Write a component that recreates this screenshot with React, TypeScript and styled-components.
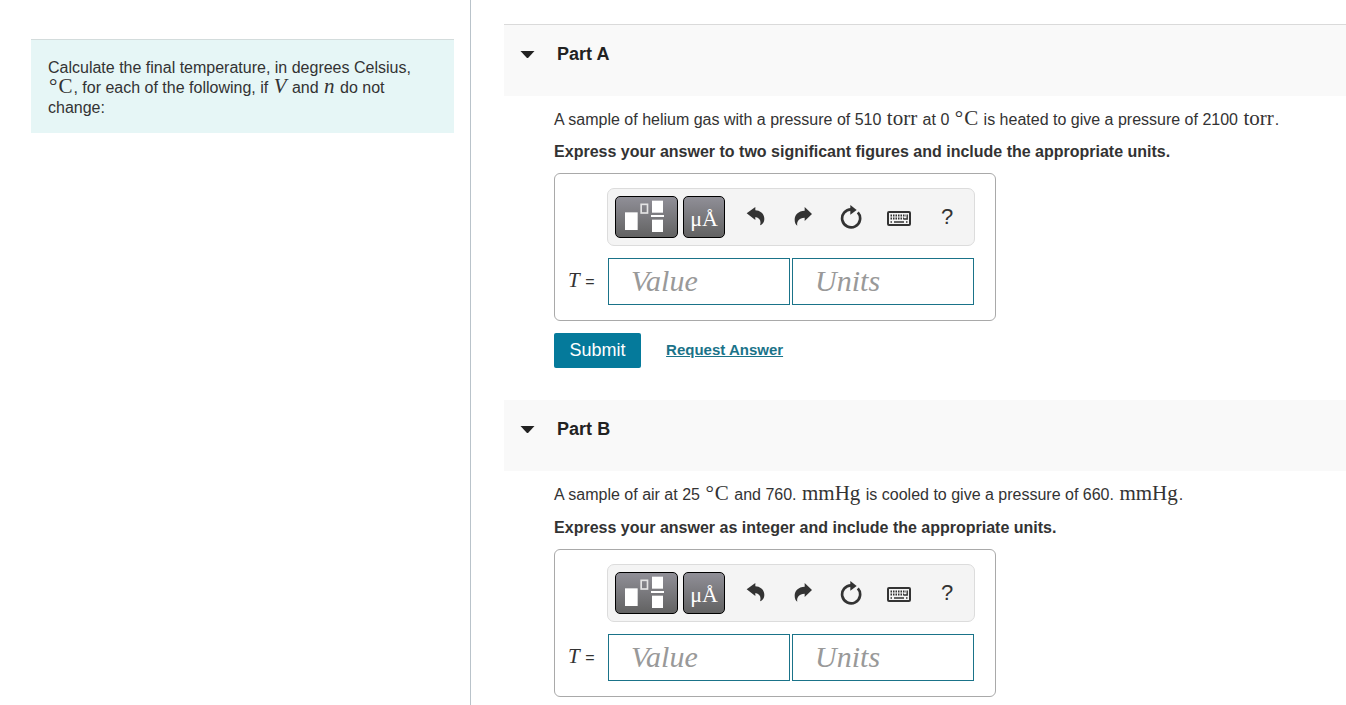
import React, { useState } from "react";
import styled, { createGlobalStyle } from "styled-components";

const sans = `"Liberation Sans", Arial, Helvetica, sans-serif`;
const serif = `"Liberation Serif", "Times New Roman", serif`;

const GlobalStyle = createGlobalStyle`
  *, *::before, *::after { box-sizing: border-box; }
  body {
    margin: 0;
    background: #fff;
    color: #333;
    font: 16px/20px ${sans};
  }
  button, input { font-family: inherit; }
`;

const Page = styled.div`
  display: grid;
  grid-template-columns: 35% minmax(0, 1fr);
  min-height: 100vh;
`;

const Sidebar = styled.aside`
  padding: 39px 16px 0 31px;
  border-right: 1px solid #b9c3ca;
`;

const Prompt = styled.p`
  margin: 0;
  padding: 18px 24px 15px 17px;
  border-top: 1px solid #d3dcdc;
  background: #e6f6f6;
`;

const Main = styled.main`
  padding: 24px 0 8px 33px;
`;

const Part = styled.section`
  & + & { margin-top: 32px; }
  &:first-child > header { border-top: 1px solid #dadada; }
`;

const PartHeader = styled.header`
  padding: 19px 16px 32px;
  background: #f9f9f9;
`;

const PartTitle = styled.h2`
  margin: 0;
  font-size: 18px;
  line-height: 20px;
`;

const Toggle = styled.button`
  display: flex;
  align-items: center;
  gap: 22px;
  padding: 0;
  border: 0;
  background: none;
  color: #222;
  font: inherit;
  cursor: pointer;
`;

const PartBody = styled.div`
  padding: 14px 16px 0 50px;
`;

const Statement = styled.p<{ $gap: number }>`
  margin: 0 0 ${(p) => p.$gap}px;
`;

const Instruction = styled.p`
  margin: 0 0 11px;
  font-weight: bold;
`;

const Unit = styled.span`
  margin: 0 1px;
  font-family: ${serif};
  font-size: 21px;
  line-height: 0;
`;

const Variable = styled(Unit)`
  font-style: italic;
`;

const Degree = styled.span`
  margin-right: 1px;
`;

const AnswerBox = styled.div`
  display: grid;
  grid-template-columns: 52px minmax(0, 1fr);
  row-gap: 12px;
  align-items: center;
  max-width: 442px;
  padding: 14px 20px 15px 0;
  border: 1px solid #a9a9a9;
  border-radius: 6px;
`;

const Toolbar = styled.div`
  grid-column: 2;
  display: flex;
  align-items: center;
  gap: 5px;
  height: 58px;
  padding: 0 7px;
  border: 1px solid #dcdcdc;
  border-radius: 7px;
  background: #f4f4f4;
`;

const DarkButton = styled.button<{ $width: number }>`
  display: flex;
  flex: none;
  align-items: center;
  justify-content: center;
  width: ${(p) => p.$width}px;
  height: 42px;
  padding: 0;
  border: 1px solid #000;
  border-radius: 5px;
  background: linear-gradient(#908f97, #626262);
  color: #fff;
  font: 22px/40px ${serif};
`;

const Symbols = styled.span`
  padding-top: 4px;
`;

const Tools = styled.div`
  display: flex;
  flex: 1;
  min-width: 0;
  margin-left: 1px;
`;

const ToolButton = styled.button`
  display: flex;
  flex: none;
  align-items: center;
  justify-content: center;
  width: 48px;
  height: 42px;
  padding: 0;
  border: 0;
  background: none;
  color: #333;
  font-size: 22px;
`;

const FieldLabel = styled.label`
  padding-left: 12px;
  white-space: nowrap;
`;

const Fields = styled.div`
  display: flex;
  gap: 2px;
  padding: 0 1px;
`;

const Field = styled.input`
  flex: 1;
  min-width: 0;
  height: 47px;
  padding: 0 22px 2px;
  border: 1px solid #1a7389;
  border-radius: 0;
  background: #fff;
  font: italic 30px/44px ${serif};
  &::placeholder { color: #999; opacity: 1; }
`;

const Actions = styled.div`
  display: flex;
  align-items: center;
  gap: 25px;
  margin-top: 12px;
`;

const Submit = styled.button`
  width: 87px;
  height: 35px;
  padding: 0;
  border: 0;
  border-radius: 2px;
  background: #057a9b;
  color: #fff;
  font-size: 18px;
`;

const RequestLink = styled.a`
  padding-bottom: 2px;
  color: #1a7389;
  font-size: 15px;
  font-weight: bold;
`;

const Caret = () => (
  <svg width="15" height="9" viewBox="0 0 15 9" aria-hidden="true">
    <path d="M.5 1h14L8.500 7.500q-1 1-2 0z" fill="#222" />
  </svg>
);

const TemplateIcon = () => (
  <svg width="61" height="40" viewBox="0 0 183 120" aria-hidden="true">
    <g fill="#fff">
      <rect x="27" y="46" width="38" height="53" />
      <rect x="108" y="11" width="33" height="36" />
      <rect x="105" y="54" width="39" height="6" />
      <rect x="108" y="68" width="33" height="37" />
    </g>
    <rect x="75.500" y="22" width="19" height="26" fill="none" stroke="#e4e4e4" strokeWidth="5" />
  </svg>
);

const UndoIcon = () => (
  <svg width="20" height="20" viewBox="-3 0 60 60" fill="currentColor" aria-hidden="true">
    <path d="M2 19 28 0v10c17 1 27 12 27 26 0 9-5 16-13 19 4-12 0-23-14-25v9z" />
  </svg>
);

const RedoIcon = () => (
  <svg width="20" height="20" viewBox="0 0 60 60" fill="currentColor" aria-hidden="true">
    <path d="M57 21 35 0v11C16 12 5 23 5 38c0 9 3 15 8 18-3-13 5-23 22-24v10z" />
  </svg>
);

const ResetIcon = () => (
  <svg width="22" height="24" viewBox="0 0 66 72" aria-hidden="true">
    <path d="M53.500 22A27 27 0 1 1 34 13" fill="none" stroke="currentColor" strokeWidth="8" />
    <path d="M31 0 50 15 31 29z" fill="currentColor" />
  </svg>
);

const KeyboardIcon = () => (
  <svg width="24" height="20" viewBox="0 0 24 20" fill="none" stroke="currentColor" aria-hidden="true">
    <rect x="1" y="5" width="22" height="13" rx="1" strokeWidth="2" />
    <path d="M3.500 8.500H19M3.500 11.500H17" strokeWidth="1.800" strokeDasharray="1.500 1" />
    <path d="M20.200 7.500V12H17" strokeWidth="1.400" />
    <path d="M3.500 15H5M7 15H17M19 15H20.500" strokeWidth="1.500" />
  </svg>
);

const Celsius = () => (
  <Unit>
    <Degree>°</Degree>C
  </Unit>
);

interface PartProps {
  id: string;
  instruction: string;
  gap: number;
  actions?: boolean;
  children: React.ReactNode;
}

function QuestionPart({ id, instruction, gap, actions, children }: PartProps) {
  const [open, setOpen] = useState(true);
  return (
    <Part>
      <PartHeader>
        <PartTitle>
          <Toggle type="button" aria-expanded={open} onClick={() => setOpen(!open)}>
            <Caret />
            Part {id}
          </Toggle>
        </PartTitle>
      </PartHeader>
      {open && (
        <PartBody>
          <Statement $gap={gap}>{children}</Statement>
          <Instruction>{instruction}</Instruction>
          <AnswerBox>
            <Toolbar role="toolbar">
              <DarkButton type="button" $width={63} aria-label="Templates">
                <TemplateIcon />
              </DarkButton>
              <DarkButton type="button" $width={42}>
                <Symbols>μÅ</Symbols>
              </DarkButton>
              <Tools>
                <ToolButton type="button" aria-label="Undo"><UndoIcon /></ToolButton>
                <ToolButton type="button" aria-label="Redo"><RedoIcon /></ToolButton>
                <ToolButton type="button" aria-label="Reset"><ResetIcon /></ToolButton>
                <ToolButton type="button" aria-label="Keyboard shortcuts"><KeyboardIcon /></ToolButton>
                <ToolButton type="button">?</ToolButton>
              </Tools>
            </Toolbar>
            <FieldLabel htmlFor={`value-${id}`}>
              <Variable>T</Variable> =
            </FieldLabel>
            <Fields>
              <Field id={`value-${id}`} placeholder="Value" />
              <Field aria-label="Units" placeholder="Units" />
            </Fields>
          </AnswerBox>
          {actions && (
            <Actions>
              <Submit type="button">Submit</Submit>
              <RequestLink href="#request">Request Answer</RequestLink>
            </Actions>
          )}
        </PartBody>
      )}
    </Part>
  );
}

export default function App() {
  return (
    <>
      <GlobalStyle />
      <Page>
        <Sidebar>
          <Prompt>
            Calculate the final temperature, in degrees Celsius, <Celsius />, for each of the
            following, if <Variable>V</Variable> and <Variable>n</Variable> do not change:
          </Prompt>
        </Sidebar>
        <Main>
          <QuestionPart
            id="A"
            gap={12}
            actions
            instruction="Express your answer to two significant figures and include the appropriate units."
          >
            A sample of helium gas with a pressure of 510 <Unit>torr</Unit> at 0 <Celsius /> is
            heated to give a pressure of 2100 <Unit>torr</Unit>.
          </QuestionPart>
          <QuestionPart
            id="B"
            gap={13}
            instruction="Express your answer as integer and include the appropriate units."
          >
            A sample of air at 25 <Celsius /> and 760. <Unit>mmHg</Unit> is cooled to give a
            pressure of 660. <Unit>mmHg</Unit>.
          </QuestionPart>
        </Main>
      </Page>
    </>
  );
}
